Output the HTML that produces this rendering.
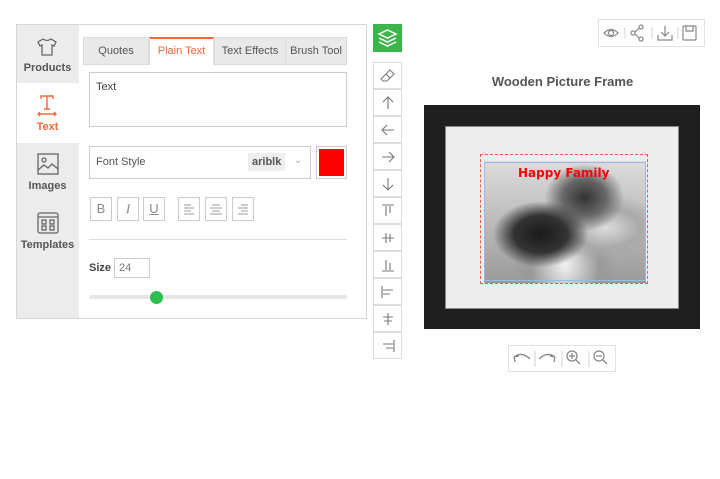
<!DOCTYPE html>
<html><head><style>
*{box-sizing:border-box;margin:0;padding:0}
body{width:720px;height:479px;background:#fff;font-family:"Liberation Sans",sans-serif;position:relative;overflow:hidden;color:#555}
.a{position:absolute}
.bx{position:absolute;border:1px solid #d6d6d6;background:#fff}
.side{font-size:11px;font-weight:bold;color:#555;text-align:center;width:63px}
.tab{position:absolute;top:37px;height:28px;background:#e9e9e9;border:1px solid #dcdcdc;font-size:11px;text-align:center;line-height:27px;color:#555}
.fb{position:absolute;top:197px;width:22px;height:24px;border:1px solid #ccc;background:#fff;font-size:13px;color:#888;text-align:center;line-height:22px}
.tl{position:absolute;left:373px;width:29px;height:27px;border:1px solid #ddd;background:#fff}
.tl svg{position:absolute;left:6px;top:5px}
</style></head><body>
<div class="bx" style="left:16px;top:24px;width:351px;height:295px"></div>
<div class="a" style="left:17px;top:25px;width:62px;height:293px;background:#ececec"></div>
<div class="a" style="left:17px;top:83px;width:62px;height:60px;background:#fff"></div>
<svg class="a" style="left:36px;top:36px" width="22" height="22" viewBox="0 0 22 22" fill="none" stroke="#666" stroke-width="1.3"><path d="M7 3 L2 6 L4 10 L6 9 V19 H16 V9 L18 10 L20 6 L15 3 Q11 6 7 3Z"/></svg>
<div class="a side" style="left:16px;top:62px">Products</div>
<svg class="a" style="left:36px;top:94px" width="22" height="24" viewBox="0 0 22 24" fill="none" stroke="#f26a3c" stroke-width="1.4"><path d="M5 5 V2 H17 V5 M11 2 V15 M8 15 H14 M2 20 H20 M4 18 L2 20 L4 22 M18 18 L20 20 L18 22"/></svg>
<div class="a side" style="left:16px;top:121px;color:#f26a3c">Text</div>
<svg class="a" style="left:37px;top:153px" width="22" height="22" viewBox="0 0 22 22" fill="none" stroke="#666" stroke-width="1.3"><rect x="1" y="1" width="20" height="20"/><circle cx="7" cy="7" r="2"/><path d="M1 17 L7 12 L11 15 L15 11 L21 16"/></svg>
<div class="a side" style="left:16px;top:180px">Images</div>
<svg class="a" style="left:37px;top:212px" width="22" height="22" viewBox="0 0 22 22" fill="none" stroke="#666" stroke-width="1.3"><rect x="1" y="1" width="20" height="20" rx="2"/><path d="M1 5 H21"/><rect x="5" y="8" width="4" height="4"/><rect x="13" y="8" width="4" height="4"/><rect x="5" y="14" width="4" height="4"/><rect x="13" y="14" width="4" height="4"/></svg>
<div class="a side" style="left:16px;top:239px">Templates</div>

<div class="tab" style="left:83px;width:66px">Quotes</div>
<div class="tab" style="left:149px;width:65px;background:#fff;border-top:2px solid #f26a3c;border-bottom:none;color:#f26a3c;line-height:25px">Plain Text</div>
<div class="tab" style="left:214px;width:72px">Text Effects</div>
<div class="tab" style="left:285px;width:62px">Brush Tool</div>

<div class="bx" style="left:89px;top:72px;width:258px;height:55px;border-color:#ccc;font-size:11px;padding:8px 6px;color:#444">Text</div>
<div class="bx" style="left:89px;top:146px;width:222px;height:33px;border-color:#ccc;font-size:11px;padding:9px 6px;color:#555">Font Style
<span class="a" style="left:158px;top:6px;background:#eee;padding:3px 4px;font-weight:bold;color:#555">ariblk</span><span class="a" style="left:204px;top:8px;color:#aaa;font-size:10px">⌄</span></div>
<div class="bx" style="left:316px;top:146px;width:31px;height:33px;border-color:#ccc;padding:2px"><div style="width:100%;height:100%;background:#f00"></div></div>

<div class="fb" style="left:90px">B</div>
<div class="fb" style="left:117px;font-style:italic;font-family:'Liberation Serif',serif">I</div>
<div class="fb" style="left:143px;text-decoration:underline">U</div>
<svg class="a" style="left:178px;top:197px" width="76" height="24" viewBox="0 0 76 24" fill="none" stroke="#999" stroke-width="1"><rect x="0.5" y="0.5" width="21" height="23" stroke="#ccc"/><rect x="27.5" y="0.5" width="21" height="23" stroke="#ccc"/><rect x="54.5" y="0.5" width="21" height="23" stroke="#ccc"/><path d="M6 8H13M6 11H16M6 14H13M6 17H16M34 8H42M32 11H44M34 14H42M32 17H44M63 8H70M60 11H70M63 14H70M60 17H70"/></svg>
<div class="a" style="left:89px;top:239px;width:258px;height:1px;background:#ddd"></div>
<div class="a" style="left:89px;top:262px;font-size:11px;font-weight:bold;color:#444">Size</div>
<div class="bx" style="left:114px;top:258px;width:36px;height:20px;border-color:#ccc;font-size:11px;padding:3px 4px;color:#777">24</div>
<div class="a" style="left:89px;top:295px;width:258px;height:4px;border-radius:2px;background:#e6e6e6"></div>
<div class="a" style="left:150px;top:291px;width:13px;height:13px;border-radius:50%;background:#2ebd4e"></div>

<div class="a" style="left:373px;top:24px;width:29px;height:28px;background:#3cb54a"></div>
<svg class="a" style="left:377px;top:28px" width="21" height="20" viewBox="0 0 21 20" fill="none" stroke="#fff" stroke-width="1.5"><path d="M10.5 2 L19 6 L10.5 10 L2 6Z M2 10 L10.5 14 L19 10 M2 14 L10.5 18 L19 14"/></svg>
<div class="tl" style="top:62px"><svg width="16" height="16" viewBox="0 0 16 16" fill="none" stroke="#777" stroke-width="1.1"><path d="M10 2 L14 6 L7 13 L3 13 L1 11 Z M6 6 L10 10"/></svg></div>
<div class="tl" style="top:89px"><svg width="16" height="16" viewBox="0 0 16 16" fill="none" stroke="#777" stroke-width="1.1"><path d="M8 2V14M3 7L8 2L13 7"/></svg></div>
<div class="tl" style="top:116px"><svg width="16" height="16" viewBox="0 0 16 16" fill="none" stroke="#777" stroke-width="1.1"><path d="M2 8H14M7 3L2 8L7 13"/></svg></div>
<div class="tl" style="top:143px"><svg width="16" height="16" viewBox="0 0 16 16" fill="none" stroke="#777" stroke-width="1.1"><path d="M2 8H14M9 3L14 8L9 13"/></svg></div>
<div class="tl" style="top:170px"><svg width="16" height="16" viewBox="0 0 16 16" fill="none" stroke="#777" stroke-width="1.1"><path d="M8 2V14M3 9L8 14L13 9"/></svg></div>
<div class="tl" style="top:197px"><svg width="16" height="16" viewBox="0 0 16 16" fill="none" stroke="#777" stroke-width="1.1"><path d="M2 2H14M6 3V13M10 3V10"/></svg></div>
<div class="tl" style="top:224px"><svg width="16" height="16" viewBox="0 0 16 16" fill="none" stroke="#777" stroke-width="1.1"><path d="M2 8H14M6 3V13M10 4V12"/></svg></div>
<div class="tl" style="top:251px"><svg width="16" height="16" viewBox="0 0 16 16" fill="none" stroke="#777" stroke-width="1.1"><path d="M2 14H14M6 3V13M10 6V13"/></svg></div>
<div class="tl" style="top:278px"><svg width="16" height="16" viewBox="0 0 16 16" fill="none" stroke="#777" stroke-width="1.1"><path d="M2 2V14M3 6H13M3 10H10"/></svg></div>
<div class="tl" style="top:305px"><svg width="16" height="16" viewBox="0 0 16 16" fill="none" stroke="#777" stroke-width="1.1"><path d="M8 2V14M3 6H13M4 10H12"/></svg></div>
<div class="tl" style="top:332px"><svg width="16" height="16" viewBox="0 0 16 16" fill="none" stroke="#777" stroke-width="1.1"><path d="M14 2V14M3 6H13M6 10H13"/></svg></div>

<div class="bx" style="left:598px;top:19px;width:107px;height:28px;border-color:#e2e2e2"></div>
<svg class="a" style="left:603px;top:24px" width="100" height="18" viewBox="0 0 100 18" fill="none" stroke="#888" stroke-width="1.2"><path d="M1 9 Q8 2 15 9 Q8 16 1 9Z"/><circle cx="8" cy="9" r="2.5"/><path d="M22 3 V15 M49 3 V15 M75 3 V15" stroke="#ddd"/><circle cx="30" cy="9" r="2"/><circle cx="38" cy="3" r="2"/><circle cx="38" cy="15" r="2"/><path d="M32 8 L36 4 M32 10 L36 14"/><path d="M62 2 V12 M58 8 L62 12 L66 8 M55 11 V16 H69 V11"/><rect x="80" y="2" width="13" height="14" rx="1"/><path d="M83 2 V7 H90 V2"/></svg>

<div class="a" style="left:440px;top:74px;width:245px;text-align:center;font-size:13px;font-weight:bold;color:#555">Wooden Picture Frame</div>
<div class="a" style="left:424px;top:105px;width:276px;height:224px;background:#1e1e1e"></div>
<div class="a" style="left:445px;top:126px;width:234px;height:183px;background:#ededed;border:1px solid #888"></div>
<div class="a" style="left:484px;top:161px;width:162px;height:122px;background:radial-gradient(ellipse at 35% 60%,#1a1a1a 0,#333 18%,transparent 32%),radial-gradient(ellipse at 62% 30%,#333 0,#666 15%,transparent 28%),radial-gradient(ellipse at 75% 55%,#ddd 0,#aaa 20%,transparent 35%),radial-gradient(ellipse at 50% 85%,#f2f2f2 0,#999 30%,transparent 45%),linear-gradient(#dcdcdc,#9a9a9a)"></div>
<div class="a" style="left:480px;top:154px;width:168px;height:130px;border:1px dashed #e55"></div>
<div class="a" style="left:484px;top:162px;width:162px;height:119px;border:1px solid #9ab8f0"></div>
<div class="a" style="left:518px;top:166px;font-size:12px;font-weight:bold;color:#f00;font-family:'DejaVu Sans',sans-serif">Happy Family</div>

<div class="bx" style="left:508px;top:345px;width:108px;height:27px;border-color:#e2e2e2"></div>
<svg class="a" style="left:512px;top:349px" width="100" height="20" viewBox="0 0 100 20" fill="none" stroke="#888" stroke-width="1.3"><path d="M2 8 Q10 2 18 10 M2 8 L3 13 M2 8 L7 7"/><path d="M43 8 Q35 2 27 10 M43 8 L42 13 M43 8 L38 7"/><circle cx="60" cy="7" r="5"/><path d="M64 11 L68 15 M57 7 H63 M60 4 V10"/><circle cx="87" cy="7" r="5"/><path d="M91 11 L95 15 M84 7 H90"/><path d="M23 2 V18 M50 2 V18 M77 2 V18" stroke="#ddd"/></svg>
</body></html>
